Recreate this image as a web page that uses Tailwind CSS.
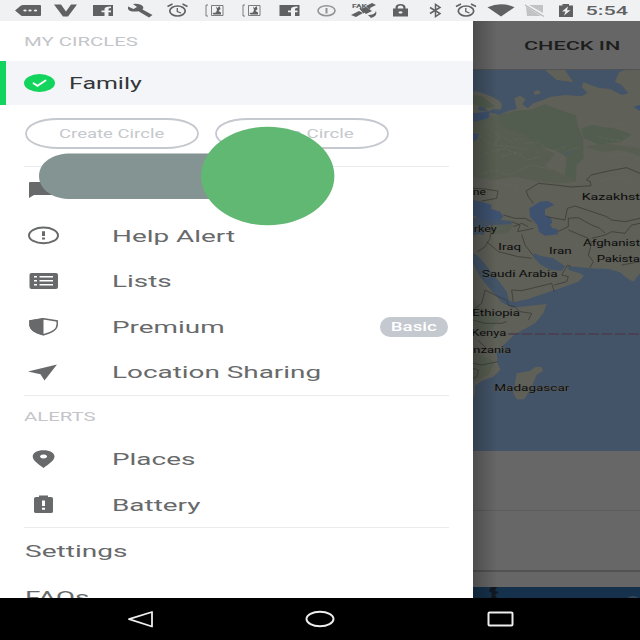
<!DOCTYPE html>
<html lang="en">
<head>
<meta charset="utf-8">
<title>Circles</title>
<script src="https://cdn.jsdelivr.net/npm/@tailwindcss/browser@4"></script>
</head>
<body class="w-[640px] h-[640px] overflow-hidden bg-white font-['Roboto',sans-serif] flex flex-col">

<!-- Status bar -->
<header class="h-[21px] shrink-0 bg-[#eff1f3] text-[#5f6163]">
<svg class="block w-full h-full" viewBox="0 0 640 21" fill="currentColor">
  <path d="M15 10.500 21 5.500Q22 5 23 5H40Q41 5 41 6V15Q41 16 40 16H23Q22 16 21 15.500Z"/>
  <g fill="#eff1f3"><ellipse cx="25" cy="10.500" rx="1.700" ry="1"/><ellipse cx="30" cy="10.500" rx="1.700" ry="1"/><ellipse cx="35.500" cy="10.500" rx="1.700" ry="1"/></g>
  <path d="M54 4.500H61L66 11.500 71 4.500H77L68 16.500H63Z"/>
  <path d="M93 5H113V16H108.500V12.200H111V10.400H108.500V9Q108.500 8 111 8V6.500Q104.500 6.300 104.500 9V10.400H101.500V12.200H104.500V16H93Z"/>
  <path d="M128 6.500 133.500 9 137 7 133 4Q140 3 143 6.500 144 8 142.500 9.500L152.500 15 149 17.500 138.500 11.300Q130 12.500 128 9Z"/>
  <g id="alarm" fill="none" stroke="currentColor"><ellipse cx="177.500" cy="11" rx="7.700" ry="5" stroke-width="1.700"/><path d="M167.500 6.500 172.500 4M187.500 6.500 182.500 4" stroke-width="1.500"/><path d="M177.300 8V11.500L181 13" stroke-width="1.300"/></g>
  <g id="shot"><path d="M208 5H206V16H208M211.500 5.500H223V15.500H211.500Z" fill="none" stroke="currentColor" stroke-width=".8"/><path d="M216 6.500 217.500 8 219.500 6 220.500 9 218.500 11 221 12.500V14.500H213.500L212.500 13 216 12.500 217 10Z"/></g>
  <use href="#shot" x="37"/>
  <path d="M279.500 5H299.500V16H295V12.200H297.500V10.400H295V9Q295 8 297.500 8V6.500Q291 6.300 291 9V10.400H288V12.200H291V16H279.500Z"/>
  <g fill="none" stroke="#909294"><ellipse cx="326.500" cy="10.700" rx="8.500" ry="5" stroke-width="1.600"/><path d="M326.500 8V13.500" stroke-width="2"/></g>
  <text x="352" y="8" font-size="5.500" font-weight="700" textLength="15" lengthAdjust="spacingAndGlyphs">FAK</text>
  <path d="M351 15 359 11 363 13 356 17ZM360 9 366 7 372 11 366 14ZM366 6 372 3 376 5 369 8.500ZM368 15Q375 15 376 11 378 16 371 18Z"/>
  <path d="M364 13 360 8M370 9 367 6" stroke="currentColor" stroke-width="1.500"/>
  <path fill-rule="evenodd" d="M393 8.500H395.500V7.500Q395.500 4 400.500 4T405.500 7.500V8.500H408V16.500H393ZM397.700 8.500H403.300V7.500Q403 5.500 400.500 5.500T397.700 7.500ZM400.500 11.200A2 1.200 0 1 0 400.600 11.200Z"/>
  <path d="M430 7.500 440 13.500 435.500 16.500V4.500L440 7.500 430 13.500" fill="none" stroke="currentColor" stroke-width="1.500"/>
  <use href="#alarm" x="288.500"/>
  <path d="M487.500 7.200Q501 1.500 514.500 7.200L501 16.500Z"/>
  <path d="M529 5H543V13ZM526 6.500 541 16H527Z" fill="#c0c2c4"/><path d="M525 5 544 16.500" stroke="#b5b7b9" stroke-width="1.200"/>
  <path d="M559 5.500H562.500V4H569V5.500H573V17H559Z"/><path d="M568 6.500 562 11.500H565.500L564 15.500 570.500 10.200H567Z" fill="#eff1f3"/>
  <text x="585.500" y="15.400" font-size="13.300" font-weight="500" textLength="42.500" lengthAdjust="spacingAndGlyphs">5:54</text>
</svg>
</header>

<div class="h-[577px] shrink-0 flex overflow-hidden">
  <!-- Drawer -->
  <nav class="relative w-[473px] h-full shrink-0 bg-white overflow-hidden text-[#67696a]">
    <div class="h-10 pt-px flex items-center pl-6 text-[12.800px] text-[#c3c5c8]"><span class="origin-left scale-x-[1.590]">MY CIRCLES</span></div>
    <div class="h-11 flex items-center bg-[#f3f5f8] border-l-6 border-[#13d45c] pl-[18px] text-[#343638]">
      <svg class="w-[31px] h-[18px] mr-[14px]" viewBox="0 0 31 18"><ellipse cx="15.500" cy="9" rx="15.500" ry="9" fill="#13d45c"/><path d="M9.500 9.200 13.500 11.800 21.500 6.500" fill="none" stroke="#fff" stroke-width="1.800" stroke-linecap="round"/></svg>
      <span class="origin-left scale-x-[1.580] text-[15.800px] pt-px">Family</span>
    </div>
    <div class="h-[61px] pt-[13px] pl-[25px] flex gap-4 text-[12.200px] text-[#c5c8cc]">
      <div class="relative w-[174px] h-[31px] flex items-center justify-center">
        <svg class="absolute inset-0" width="174" height="31"><path d="M33 1H141C159 1 173 7 173 15.500S159 30 141 30H33C15 30 1 24 1 15.500S15 1 33 1Z" fill="none" stroke="#c5c9cf" stroke-width="1.800"/></svg>
        <span class="scale-x-[1.520] pt-px">Create Circle</span>
      </div>
      <div class="relative w-[174px] h-[31px] flex items-center justify-center">
        <svg class="absolute inset-0" width="174" height="31"><path d="M33 1H141C159 1 173 7 173 15.500S159 30 141 30H33C15 30 1 24 1 15.500S15 1 33 1Z" fill="none" stroke="#c5c9cf" stroke-width="1.800"/></svg>
        <span class="scale-x-[1.540] pt-px">Join a Circle</span>
      </div>
    </div>
    <div class="ml-6 w-[425px] border-t border-[#e9ebed] h-[229px] text-[17px] flex flex-col">
      <div class="h-[45.600px] flex items-center"><svg class="w-10 h-6" viewBox="0 0 40 24"><path d="M6 4H32Q34 4 34 5V16Q34 17 32 17H10L5 20V5Q5 4 6 4Z" fill="currentColor"/></svg><svg class="w-[150px] h-6 ml-12"></svg></div>
      <div class="h-[45.600px] flex items-center"><svg class="w-10 h-6 mr-12" viewBox="0 0 40 24"><ellipse cx="19.500" cy="12.400" rx="14.500" ry="7.900" fill="none" stroke="currentColor" stroke-width="2"/><path d="M18 8.200H21V13H18ZM18 14.600H21V16.400H18Z" fill="currentColor"/></svg><span class="origin-left scale-x-[1.640] whitespace-nowrap pt-[2px]">Help Alert</span></div>
      <div class="h-[45.600px] flex items-center"><svg class="w-10 h-6 mr-12" viewBox="0 0 40 24"><rect x="5.500" y="4" width="28.500" height="16" rx="2" fill="currentColor"/><path d="M10 7.800H13M15.500 7.800H29M10 11.800H13M15.500 11.800H29M10 15.800H13M15.500 15.800H29" stroke="#fff" stroke-width="1.400"/></svg><span class="origin-left scale-x-[1.640] pt-[2px]">Lists</span></div>
      <div class="h-[45.600px] flex items-center"><svg class="w-10 h-6 mr-12" viewBox="0 0 40 24"><path d="M19.500 3.800 33.200 6V9.500Q33.200 16.500 19.500 19.800 6 16.500 6 9.500V6Z" fill="#fff" stroke="currentColor" stroke-width="1.500"/><path d="M19.500 3V20.500Q5.300 17 5.300 9.500V5.500Z" fill="currentColor"/></svg><span class="origin-left scale-x-[1.640] pt-[2px]">Premium</span>
        <span class="ml-auto mr-px w-[68px] h-[20px] rounded-[10px] bg-[#c4c8cf] text-white text-[12px] font-medium flex items-center justify-center"><span class="scale-x-[1.560]">Basic</span></span></div>
      <div class="h-[45.600px] flex items-center"><svg class="w-10 h-6 mr-12" viewBox="0 0 40 24"><path d="M33 4.500 20.500 20.500 16.500 14.200 4 11.500Z" fill="currentColor"/></svg><span class="origin-left scale-x-[1.640] whitespace-nowrap pt-[2px]">Location Sharing</span></div>
    </div>
    <div class="ml-6 w-[425px] border-t border-[#e9ebed] h-[132px] text-[17px]">
      <div class="h-[41px] pt-px flex items-center text-[12.800px] text-[#c3c5c8]"><span class="origin-left scale-x-[1.590]">ALERTS</span></div>
      <div class="h-[45.600px] flex items-center"><svg class="w-10 h-6 mr-12" viewBox="0 0 40 24"><path fill-rule="evenodd" d="M19.500 2.300C26 2.300 30.500 5 30.500 8.600C30.500 12.500 24.500 16.500 19.500 20C14.500 16.500 8.700 12.500 8.700 8.600C8.700 5 13 2.300 19.500 2.300ZM19.500 6.500A3.500 2 0 1 0 19.600 6.500Z" fill="currentColor"/></svg><span class="origin-left scale-x-[1.640]">Places</span></div>
      <div class="h-[45.600px] flex items-center"><svg class="w-10 h-6 mr-12" viewBox="0 0 40 24"><path d="M15 2.500H24V4H27Q29 4 29 5.500V18.500Q29 20 27 20H12Q10 20 10 18.500V5.500Q10 4 12 4H15Z" fill="currentColor"/><path d="M18 7.500H21V13H18ZM18 14.700H21V16.700H18Z" fill="#fff"/></svg><span class="origin-left scale-x-[1.640] pt-px">Battery</span></div>
    </div>
    <div class="ml-6 w-[425px] border-t border-[#e9ebed] text-[17px] pl-[.5px]">
      <div class="h-[45.600px] flex items-center"><span class="origin-left scale-x-[1.650] pt-px">Settings</span></div>
      <div class="h-[45.600px] flex items-center"><span class="origin-left scale-x-[1.630] pt-[2px]">FAQs</span></div>
    </div>
    <!-- Swipe indicator over the drawer -->
    <svg class="absolute left-0 top-[100px]" width="340" height="110" viewBox="0 121 340 110"><path d="M68 153.500H268V199H68C50 198 39 188 39 176S50 154.500 68 153.500Z" fill="#839492"/><ellipse cx="267.700" cy="176" rx="66.700" ry="49.300" fill="#61b873"/></svg>
  </nav>

  <!-- Dimmed screen behind the drawer -->
  <main class="relative flex-1 h-full bg-[#666] flex flex-col">
    <div class="h-[49px] shrink-0 flex items-center pl-[51px] pt-[2px] text-[13.200px] font-medium text-[#1d1d1d] border-b border-[#505256]"><span class="origin-left scale-x-[1.640] whitespace-nowrap">CHECK IN</span></div>
    <svg class="w-[167px] h-[381px] shrink-0" viewBox="24 15 501 1143">
      <rect x="24" y="15" width="501" height="1143" fill="#435468"/>
      <g fill="#5f6058">
        <path d="M24 78Q60 82 100 106Q118 118 105 134L85 132 70 140 60 130 42 122 38 135 75 142 102 150 130 138 155 132 148 100 165 92 182 103 172 118 188 130 205 115 240 103 255 96 300 90 350 94 368 84 350 66 355 52 400 68 435 72 470 90 490 85 470 60 450 50 462 22 480 15H525V625L505 650 485 640 465 622 430 612 375 610 330 605 300 604 265 580 225 572 208 565 204 575 225 598 255 614 290 618 305 600 312 615 345 625 357 632 340 650 285 670 240 685 190 702 145 712 132 705 125 680 95 640 62 600 38 572 24 565V512L40 506 55 510 72 480 140 478 138 468 110 465 75 467 45 460 24 458Z"/>
        <path d="M240 15 275 45 325 52 310 30 300 15ZM205 80 220 75 229 84 210 91Z"/>
        <path d="M24 595 45 635 75 672 110 712 140 728 245 717 235 745 210 775 150 808 110 845 95 865 98 895 106 915 85 935 50 948 30 962V985L24 1000Z"/>
        <path d="M155 925 195 918 212 905 230 906 234 918 215 930 200 965 178 1003 155 1003 145 985Z"/>
      </g>
      <g fill="#505c4e" opacity=".85">
        <path d="M24 90 55 95 90 125 60 130 38 120 24 118ZM100 150 150 138 200 134 240 118 265 128 300 140 332 150 340 185 354 220 356 280 335 300 332 350 300 330 305 275 270 255 220 245 180 210 110 185ZM350 190 380 180 445 190 500 208 470 230 400 238 356 220Z"/>
      </g>
      <g fill="#535d4e" opacity=".65"><path d="M24 155 105 150 110 185 180 210 220 245 270 265 240 305 200 280 150 295 110 310 60 300 24 315ZM24 315 60 300 110 310 150 295 200 280 240 305 300 330 330 350 280 355 220 350 150 335 90 345 24 335ZM360 245 420 235 525 250V272L470 255 410 260Z"/><path d="M24 425 90 440 70 455 24 445ZM80 480 145 480 130 505 85 508ZM24 700 60 740 110 760 70 800 24 810ZM24 860 90 890 70 930 24 950Z"/></g>
      <g fill="none" stroke="#66675e" stroke-width="3" opacity=".6" stroke-dasharray="13 5"><path d="M100 205 130 230 165 220 180 235 220 232 260 260 300 245M60 180 105 215 90 235M110 275 160 260 185 285 225 275M285 285 310 258 345 245M40 330 90 315 130 330 200 300 260 315M370 170 420 185 470 175M440 275 480 265 520 285M30 380 80 350 160 365M400 350 450 335 495 345M40 210 80 240 140 245 190 255M60 265 120 250 170 275M400 215 450 225 510 235"/></g>
      <path d="M193 430 225 410 250 408 268 420 240 432 240 450 258 458 262 475 255 478 262 490 278 492V508L240 512 222 500 217 480 195 455ZM24 405 50 410 80 420 78 432 105 440 115 455 105 467 70 467 40 460 24 450ZM24 145 75 140 70 160 50 165 24 170ZM24 205 42 208 35 225 24 228ZM505 125 525 120V138Z" fill="#3e5270"/>
      <path d="M298 270 320 258" stroke="#4b5968" stroke-width="5"/>
      <g fill="none" stroke="#393832" stroke-width="2.200">
        <path d="M24 370 60 372 99 378 95 400 50 408M205 415 190 395 183 378 220 355 270 360 320 366 350 364 378 362 376 350 365 345 378 330 430 318 485 308 525 325M115 450 150 460 180 460 200 470M140 470 165 480 158 500 205 490M145 485 170 475 190 485M245 455 300 465 307 430 330 423 375 438 425 455 440 465 480 470 525 460M278 500 310 485 310 460 340 458 380 480 405 490 420 505M310 495 370 520 380 535 370 570 385 590 375 608M380 520 420 510 440 500 480 505 500 480 525 475M470 600 525 590M170 508 180 540 205 572M80 480 75 520 60 545 38 560M65 530 100 560 160 575 200 580M145 712 140 675 170 677 220 665 260 655 268 680M268 660 305 650 310 635 290 630 308 600 318 605M24 735 50 715 60 675 100 695 125 705 130 720 150 725 165 740 200 745 190 765M24 765 60 775 110 775 125 770M40 827 70 855M24 895 50 900 98 890M24 910 40 915 35 935 24 940"/>
      </g>
      <path d="M130 807H525" stroke="#4b3d4e" stroke-width="4" stroke-dasharray="32 8"/>
      <g font-family="Roboto, sans-serif" font-size="28" font-weight="400" fill="#0c0c0c" stroke="#5d5e57" stroke-width="2" paint-order="stroke">
        <text x="24" y="389" textLength="38" lengthAdjust="spacingAndGlyphs">ne</text>
        <text x="350" y="405" textLength="175" lengthAdjust="spacingAndGlyphs">Kazakhst</text>
        <text x="26" y="500" textLength="69" lengthAdjust="spacingAndGlyphs">rkey</text>
        <text x="100" y="556" textLength="68" lengthAdjust="spacingAndGlyphs">Iraq</text>
        <text x="252" y="568" textLength="68" lengthAdjust="spacingAndGlyphs">Iran</text>
        <text x="354" y="544" textLength="171" lengthAdjust="spacingAndGlyphs">Afghanist</text>
        <text x="395" y="591" textLength="130" lengthAdjust="spacingAndGlyphs">Pakista</text>
        <text x="50" y="635" textLength="228" lengthAdjust="spacingAndGlyphs">Saudi Arabia</text>
        <text x="22" y="752" textLength="143" lengthAdjust="spacingAndGlyphs">Ethiopia</text>
        <text x="19" y="813" textLength="105" lengthAdjust="spacingAndGlyphs">Kenya</text>
        <text x="25" y="864" textLength="114" lengthAdjust="spacingAndGlyphs">nzania</text>
        <text x="88" y="979" textLength="225" lengthAdjust="spacingAndGlyphs">Madagascar</text>
      </g>
    </svg>
    <div class="h-[60px] shrink-0 border-b border-[#5d5d5d] bg-[#676767]"></div>
    <div class="h-[61px] shrink-0 border-b-2 border-[#525252] bg-[#676767]"></div>
    <div class="h-[15px] shrink-0 bg-[#666]"></div>
    <div class="flex-1 bg-[#15314b]"><svg class="block w-full h-full" viewBox="0 0 167 11" preserveAspectRatio="none"><path d="M18 0H24L22 4 26 5 22 8 24 11H18L19 6 16 4Z" fill="#111820"/><ellipse cx="160" cy="12" rx="6" ry="3" fill="#35475a"/></svg></div>
    <div class="absolute left-0 top-0 w-6 h-full bg-gradient-to-r from-black/25 to-transparent"></div>
  </main>
</div>

<!-- System navigation -->
<footer class="h-[42px] shrink-0 bg-black grid grid-cols-[280px_80px_280px] items-center">
  <div class="pl-[126px]"><svg width="30" height="20" viewBox="0 0 30 20" fill="none" stroke="#eee" stroke-width="1.800"><path d="M3 10.200 26 3V17.500Z" stroke-linejoin="round"/></svg></div>
  <svg class="mx-auto" width="32" height="20" fill="none" stroke="#eee" stroke-width="1.900"><ellipse cx="16" cy="10" rx="13.500" ry="7.300"/></svg>
  <div class="pl-[125px]"><svg width="30" height="20" fill="none" stroke="#eee" stroke-width="2"><rect x="3.500" y="3.500" width="24" height="13" rx="1"/></svg></div>
</footer>
</body>
</html>
